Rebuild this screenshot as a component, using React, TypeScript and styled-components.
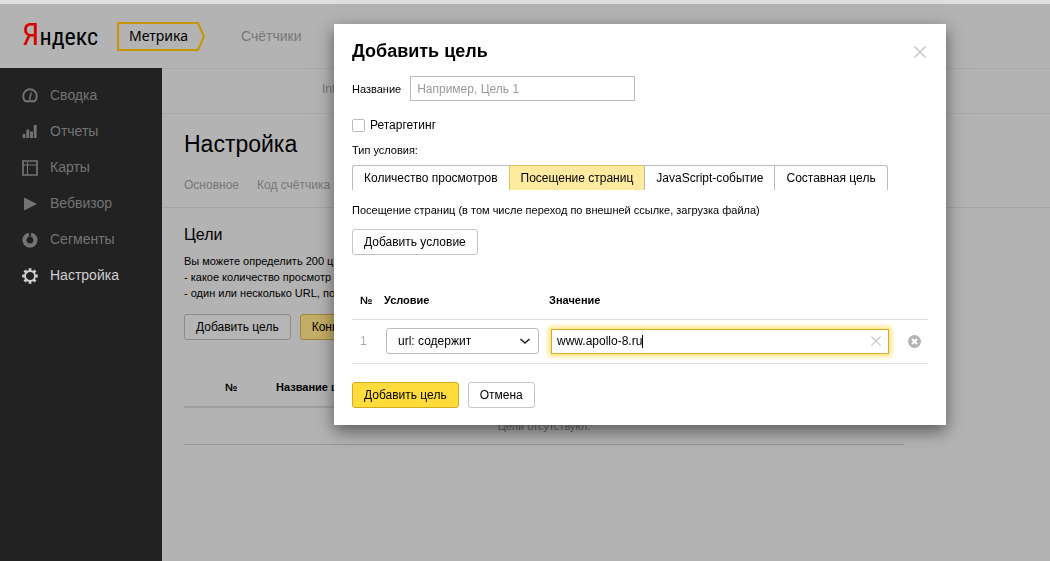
import React, { useState } from 'react';
import styled, { createGlobalStyle } from 'styled-components';

const GlobalStyle = createGlobalStyle`
  *, *::before, *::after { box-sizing: border-box; }
  html, body, #root { height: 100%; }
  body {
    margin: 0;
    background: #b3b3b3;
    color: #000;
    font: 12px/16px "Liberation Sans", Arial, sans-serif;
  }
  button, input, select { font: inherit; color: inherit; }
`;

const Page = styled.div`
  display: flex;
  flex-direction: column;
  min-height: 100%;
  border-top: 4px solid #dedede;
`;

const Header = styled.header`
  display: flex;
  align-items: center;
  height: 64px;
  padding-left: 22px;
`;

const Logo = styled.a`
  display: flex;
  align-items: baseline;
  width: 95px;
  color: #000;
  font: 24px/32px "Roboto Condensed", "Liberation Sans", sans-serif;
  text-decoration: none;
`;

const LogoInitial = styled.span`
  color: #d80000;
  font-size: 31px;
`;

const Service = styled.a`
  position: relative;
  display: flex;
  align-items: center;
  width: 88px;
  height: 29px;
  padding-left: 12px;
  color: #000;
  font: 14px/20px "Noto Sans", sans-serif;
  text-decoration: none;
`;

const ServiceFrame = styled.svg`
  position: absolute;
  inset: 0;
`;

const HeaderLink = styled.a`
  margin-left: 36px;
  color: #777;
  font-size: 14px;
  text-decoration: none;
`;

const Body = styled.div`
  display: flex;
  flex: 1;
`;

const Sidebar = styled.nav`
  flex: 0 0 162px;
  padding-top: 9px;
  background: #222;
`;

const NavItem = styled.a<{ $active?: boolean }>`
  display: flex;
  align-items: center;
  gap: 12px;
  height: 36px;
  padding-left: 22px;
  color: ${p => (p.$active ? '#d0d0d0' : '#747474')};
  font-size: 14px;
  text-decoration: none;
`;

const Main = styled.main`
  flex: 1;
  min-width: 0;
`;

const CounterBar = styled.div`
  height: 46px;
  padding: 12px 0 0 160px;
  border: solid #a8a8a8;
  border-width: 1px 0;
  color: #777;
`;

const PageHead = styled.div`
  padding: 14px 22px 18px;
  border-bottom: 1px solid #a3a3a3;
`;

const PageTitle = styled.h1`
  margin: 0 0 21px;
  font-size: 23px;
  font-weight: 400;
  line-height: 32px;
`;

const SubTabs = styled.div`
  display: flex;
  gap: 18px;
  line-height: 8px;
`;

const SubTab = styled.a`
  color: #777;
  text-decoration: none;
`;

const Goals = styled.section`
  padding: 17px 22px;
`;

const SectionTitle = styled.h2`
  margin: 0 0 8px;
  font-size: 16px;
  font-weight: 400;
  line-height: 20px;
`;

const Hint = styled.p`
  margin: 0;
  font-size: 11px;
`;

const Actions = styled.div`
  display: flex;
  gap: 9px;
`;

const GoalActions = styled(Actions)`
  margin: 13px 0 27px;
`;

const tones = {
  plain: ['#fff', '#c4c4c4'],
  primary: ['#ffdb3c', '#d1ac1c'],
  dimmed: ['#b5b5b5', '#8b8b8b'],
  dimmedYellow: ['#c4ad66', '#9d8543'],
};

const Button = styled.button<{ $tone?: keyof typeof tones }>`
  height: 26px;
  padding: 0 11px;
  border: 1px solid ${p => tones[p.$tone ?? 'plain'][1]};
  border-radius: 3px;
  background: ${p => tones[p.$tone ?? 'plain'][0]};
  white-space: nowrap;
`;

const GoalsTable = styled.table`
  width: 100%;
  max-width: 720px;
  border-collapse: collapse;
  table-layout: fixed;
  font-size: 11px;

  th {
    height: 40px;
    padding: 0;
    border-bottom: 2px solid #a0a0a0;
    text-align: left;
  }
  td {
    height: 37px;
    padding: 0;
    border-bottom: 1px solid #969696;
    color: #666;
    text-align: center;
  }
  th:first-child { width: 92px; padding-left: 41px; }
`;

const Overlay = styled.div`
  position: fixed;
  inset: 0;
  display: flex;
  justify-content: flex-end;
  align-items: flex-start;
  padding: 24px 104px 24px 24px;
`;

const Dialog = styled.div`
  width: 100%;
  max-width: 612px;
  padding: 17px 18px;
  background: #fff;
  box-shadow: 0 6px 16px rgba(0, 0, 0, 0.5);
`;

const DialogHead = styled.div`
  display: flex;
  align-items: center;
  justify-content: space-between;
  margin-bottom: 14px;
`;

const DialogTitle = styled.h2`
  margin: 0;
  font-size: 18px;
  line-height: 21px;
`;

const IconButton = styled.button`
  display: flex;
  align-items: center;
  justify-content: center;
  width: 16px;
  height: 16px;
  padding: 0;
  border: 0;
  background: none;
`;

const NameRow = styled.div`
  display: flex;
  align-items: center;
  gap: 9px;
  height: 25px;
  margin-bottom: 16px;
`;

const FieldLabel = styled.label`
  font-size: 11px;
`;

const NameInput = styled.input`
  width: 225px;
  height: 25px;
  padding: 0 6px;
  border: 1px solid #bbb;
  &::placeholder { color: #999; opacity: 1; }
`;

const CheckLabel = styled.label`
  display: flex;
  align-items: center;
  gap: 5px;
`;

const Checkbox = styled.input`
  appearance: none;
  width: 13px;
  height: 13px;
  margin: 0;
  border: 1px solid #bbb;
  border-radius: 2px;
  background: #fff;
  &:checked { background: #ffdb4d; }
`;

const TypeLabel = styled.div`
  margin: 9px 0 7px;
  font-size: 11px;
`;

const Types = styled.div`
  display: flex;
`;

const TypeTab = styled.button<{ $active?: boolean }>`
  height: 25px;
  padding: 0 11px;
  border: 1px solid ${p => (p.$active ? '#dcbf60' : '#bbb')};
  border-bottom: 0;
  border-right-width: 0;
  background: ${p => (p.$active ? '#ffeba0' : '#fff')};
  white-space: nowrap;
  &:first-child { border-top-left-radius: 3px; }
  &:last-child { border-right-width: 1px; border-top-right-radius: 3px; }
`;

const TypeNote = styled.p`
  margin: 12px 0 11px;
  font-size: 11px;
`;

const Conditions = styled.table`
  width: 100%;
  margin: 26px 0 18px;
  border-collapse: collapse;
  table-layout: fixed;

  th, td { padding: 0; border-bottom: 1px solid #ddd; text-align: left; }
  th { height: 38px; font-size: 11px; }
  td { height: 44px; }
  th:first-child, td:first-child { width: 32px; padding-left: 8px; }
  th:nth-child(2) { width: 165px; }
  th:last-child { width: 37px; }
  td:first-child { color: #aaa; }
  td:nth-child(2), td:nth-child(3) { padding-left: 2px; }
  td:last-child { padding-left: 15px; }
`;

const SelectBox = styled.div`
  position: relative;
  width: 153px;
  svg {
    position: absolute;
    right: 8px;
    top: 10px;
    pointer-events: none;
  }
`;

const Select = styled.select`
  display: block;
  appearance: none;
  width: 100%;
  height: 26px;
  padding: 0 11px;
  border: 1px solid #bbb;
  border-radius: 3px;
  background: #fff;
`;

const ValueBox = styled.div`
  position: relative;
  margin-right: 2px;
`;

const ValueInput = styled.input`
  display: block;
  width: 100%;
  height: 25px;
  padding: 0 24px 0 5px;
  border: 1px solid #d3ac2a;
  outline: none;
  box-shadow: 0 0 5px 2px #ffe16b;
`;

const Caret = styled.span`
  position: absolute;
  left: 91px;
  top: 6px;
  width: 1px;
  height: 13px;
  background: #000;
`;

const ClearButton = styled(IconButton)`
  position: absolute;
  right: 5px;
  top: 4px;
`;

const Cross = ({ size, color }: { size: number; color: string }) => (
  <svg width={size} height={size} viewBox="0 0 12 12" fill="none" stroke={color} strokeWidth="1.4">
    <path d="M.5.5l11 11M11.5.5l-11 11" />
  </svg>
);

const Icon = ({ children }: { children: React.ReactNode }) => (
  <svg width="16" height="18" viewBox="0 -2 16 18" fill="none" stroke="currentColor" strokeWidth="2">
    {children}
  </svg>
);

const navItems = [
  {
    title: 'Сводка',
    icon: <Icon><path d="M3.500 13.200a6.800 6.800 0 1 1 9 0z" strokeWidth="1.900" /><path d="M7.500 12L9.200 4.500" strokeWidth="1.500" /></Icon>,
  },
  {
    title: 'Отчеты',
    icon: <Icon><path d="M2 14v-4M5.800 14V5.500M9.500 14V7.500M13.200 14V1" strokeWidth="2.800" /></Icon>,
  },
  {
    title: 'Карты',
    icon: <Icon><path d="M1 1h14v14h-14z" strokeWidth="1.700" /><path d="M1.500 5h13M5.500 2v13" strokeWidth="1.100" /></Icon>,
  },
  {
    title: 'Вебвизор',
    icon: <Icon><path d="M2 1.500l13 6.500-13 6.500z" fill="currentColor" stroke="none" /></Icon>,
  },
  {
    title: 'Сегменты',
    icon: <Icon><path d="M9 2.600a5.500 5.500 0 1 1-2 0" strokeWidth="4" /></Icon>,
  },
  {
    title: 'Настройка',
    icon: (
      <Icon>
        <circle cx="8" cy="8" r="5" strokeWidth="1.900" />
        <path
          d="M8 .2v2.500M8 13.300v2.500M.2 8h2.500M13.300 8h2.500M2.500 2.500l1.800 1.800M11.700 11.700l1.800 1.800M2.500 13.500l1.800-1.800M11.700 4.300l1.800-1.800"
          strokeWidth="2.800"
        />
      </Icon>
    ),
  },
];

const conditionTypes = ['Количество просмотров', 'Посещение страниц', 'JavaScript-событие', 'Составная цель'];

export default function App() {
  const [type, setType] = useState(1);
  const [value, setValue] = useState('www.apollo-8.ru');

  return (
    <>
      <GlobalStyle />
      <Page>
        <Header>
          <Logo href="#"><LogoInitial>Я</LogoInitial>ндекс</Logo>
          <Service href="#">
            <ServiceFrame width="88" height="29" viewBox="0 0 88 29" fill="none" stroke="#c79500" strokeWidth="2">
              <path d="M1 1h80l6 13.500-6 13.500H1z" />
            </ServiceFrame>
            Метрика
          </Service>
          <HeaderLink href="#">Счётчики</HeaderLink>
        </Header>
        <Body>
          <Sidebar>
            {navItems.map(item => (
              <NavItem key={item.title} href="#" $active={item.title === 'Настройка'}>
                {item.icon}
                {item.title}
              </NavItem>
            ))}
          </Sidebar>
          <Main>
            <CounterBar>Int</CounterBar>
            <PageHead>
              <PageTitle>Настройка</PageTitle>
              <SubTabs>
                <SubTab href="#">Основное</SubTab>
                <SubTab href="#">Код счётчика</SubTab>
              </SubTabs>
            </PageHead>
            <Goals>
              <SectionTitle>Цели</SectionTitle>
              <Hint>
                Вы можете определить 200 ц<br />
                - какое количество просмотр<br />
                - один или несколько URL, по
              </Hint>
              <GoalActions>
                <Button $tone="dimmed">Добавить цель</Button>
                <Button $tone="dimmedYellow">Конве</Button>
              </GoalActions>
              <GoalsTable>
                <thead>
                  <tr><th>№</th><th>Название ц</th></tr>
                </thead>
                <tbody>
                  <tr><td colSpan={2}>Цели отсутствуют.</td></tr>
                </tbody>
              </GoalsTable>
            </Goals>
          </Main>
        </Body>
      </Page>

      <Overlay>
        <Dialog role="dialog" aria-labelledby="dialog-title">
          <DialogHead>
            <DialogTitle id="dialog-title">Добавить цель</DialogTitle>
            <IconButton aria-label="Закрыть"><Cross size={12} color="#c4c4c4" /></IconButton>
          </DialogHead>
          <NameRow>
            <FieldLabel htmlFor="goal-name">Название</FieldLabel>
            <NameInput id="goal-name" placeholder="Например, Цель 1" />
          </NameRow>
          <CheckLabel><Checkbox type="checkbox" />Ретаргетинг</CheckLabel>
          <TypeLabel>Тип условия:</TypeLabel>
          <Types>
            {conditionTypes.map((title, i) => (
              <TypeTab key={title} $active={i === type} onClick={() => setType(i)}>{title}</TypeTab>
            ))}
          </Types>
          <TypeNote>Посещение страниц (в том числе переход по внешней ссылке, загрузка файла)</TypeNote>
          <Button>Добавить условие</Button>
          <Conditions>
            <thead>
              <tr><th>№</th><th>Условие</th><th>Значение</th><th /></tr>
            </thead>
            <tbody>
              <tr>
                <td>1</td>
                <td>
                  <SelectBox>
                    <Select aria-label="Условие"><option>url: содержит</option></Select>
                    <svg width="12" height="7" viewBox="0 0 12 7" fill="none" stroke="#222" strokeWidth="1.6">
                      <path d="M1.500 1l4.500 4 4.500-4" />
                    </svg>
                  </SelectBox>
                </td>
                <td>
                  <ValueBox>
                    <ValueInput aria-label="Значение" value={value} onChange={e => setValue(e.target.value)} />
                    <Caret />
                    <ClearButton aria-label="Очистить" onClick={() => setValue('')}>
                      <Cross size={10} color="#c4c4c4" />
                    </ClearButton>
                  </ValueBox>
                </td>
                <td>
                  <IconButton aria-label="Удалить">
                    <svg width="13" height="13" viewBox="0 0 13 13">
                      <circle cx="6.500" cy="6.500" r="6.500" fill="#b4b4b4" />
                      <path d="M4 4l5 5M9 4l-5 5" stroke="#fff" strokeWidth="2" />
                    </svg>
                  </IconButton>
                </td>
              </tr>
            </tbody>
          </Conditions>
          <Actions>
            <Button $tone="primary">Добавить цель</Button>
            <Button>Отмена</Button>
          </Actions>
        </Dialog>
      </Overlay>
    </>
  );
}
